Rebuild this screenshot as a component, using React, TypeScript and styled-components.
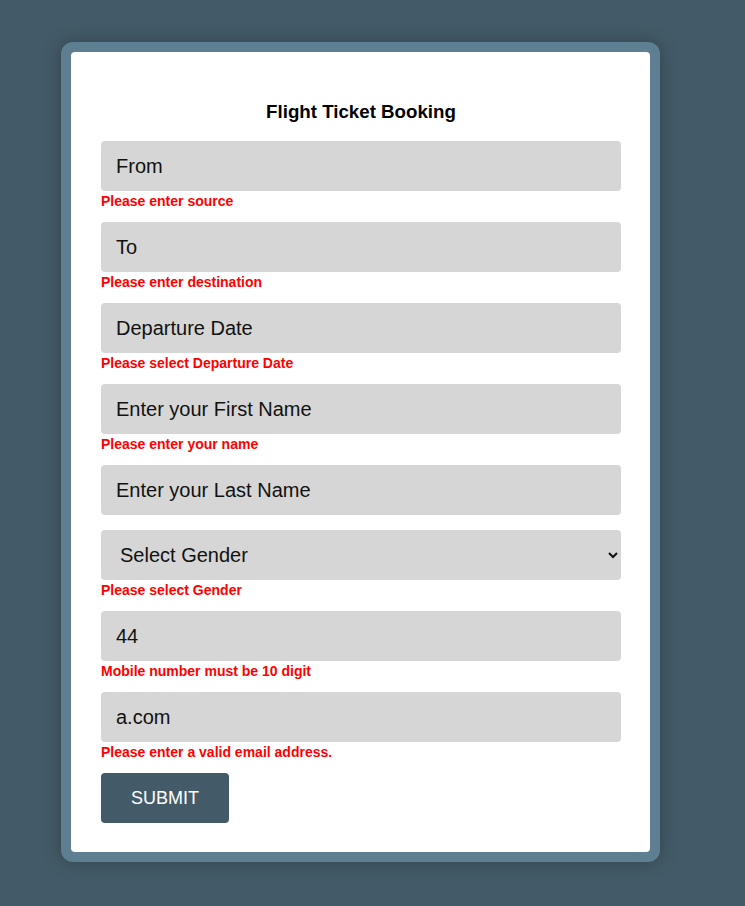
import React from "react";
import styled, { createGlobalStyle } from "styled-components";

const Global = createGlobalStyle`
  html, body { margin: 0; padding: 0; }
  body {
    background: #435b68;
    font-family: "Liberation Sans", Arial, sans-serif;
    min-height: 906px;
  }
`;

const Page = styled.div`
  padding: 42px 0 40px 61px;
`;

const Frame = styled.div`
  width: 579px;
  padding: 10px;
  background: #5e7f92;
  border-radius: 12px;
  box-shadow: 0 0 18px rgba(0, 0, 0, 0.28);
`;

const Card = styled.form`
  background: #ffffff;
  border-radius: 4px;
  padding: 30px 29px 29px 30px;
`;

const Title = styled.h3`
  margin: 18.72px 0;
  font-size: 18.72px;
  font-weight: bold;
  text-align: center;
  color: #000;
`;

const Field = styled.div`
  display: flex;
  flex-direction: column;
  margin-bottom: 15px;
`;

const Input = styled.input`
  box-sizing: border-box;
  width: 520px;
  height: 50px;
  border: none;
  border-radius: 4px;
  background: #d6d6d6;
  padding: 0 15px;
  font-family: "Liberation Sans", Arial, sans-serif;
  font-size: 20px;
  color: #111;
  outline: none;
  &::placeholder { color: #111; opacity: 1; }
`;

const Select = styled.select`
  box-sizing: border-box;
  width: 520px;
  height: 50px;
  border: none;
  border-radius: 4px;
  background: #d6d6d6;
  padding: 0 11px 0 15px;
  font-family: "Liberation Sans", Arial, sans-serif;
  font-size: 20px;
  color: #111;
  outline: none;
`;

const Error = styled.div`
  color: #ff0000;
  font-size: 14px;
  font-weight: bold;
  line-height: 11px;
  height: 11px;
  padding-top: 5px;
`;

const Button = styled.button`
  height: 50px;
  padding: 0 30px;
  border: none;
  border-radius: 4px;
  background: #435b68;
  color: #fff;
  font-family: "Liberation Sans", Arial, sans-serif;
  font-size: 18px;
  cursor: pointer;
`;

type F = { placeholder: string; error?: string };

const fields: F[] = [
  { placeholder: "From", error: "Please enter source" },
  { placeholder: "To", error: "Please enter destination" },
  { placeholder: "Departure Date", error: "Please select Departure Date" },
  { placeholder: "Enter your First Name", error: "Please enter your name" },
  { placeholder: "Enter your Last Name" },
];

export default function App() {
  return (
    <Page>
      <Global />
      <Frame>
        <Card onSubmit={(e) => e.preventDefault()}>
          <Title>Flight Ticket Booking</Title>
          {fields.map((f) => (
            <Field key={f.placeholder}>
              <Input placeholder={f.placeholder} />
              {f.error && <Error>{f.error}</Error>}
            </Field>
          ))}
          <Field>
            <Select defaultValue="">
              <option value="">Select Gender</option>
              <option value="male">Male</option>
              <option value="female">Female</option>
            </Select>
            <Error>Please select Gender</Error>
          </Field>
          <Field>
            <Input defaultValue="44" />
            <Error>Mobile number must be 10 digit</Error>
          </Field>
          <Field>
            <Input defaultValue="a.com" />
            <Error>Please enter a valid email address.</Error>
          </Field>
          <Button type="submit">SUBMIT</Button>
        </Card>
      </Frame>
    </Page>
  );
}
